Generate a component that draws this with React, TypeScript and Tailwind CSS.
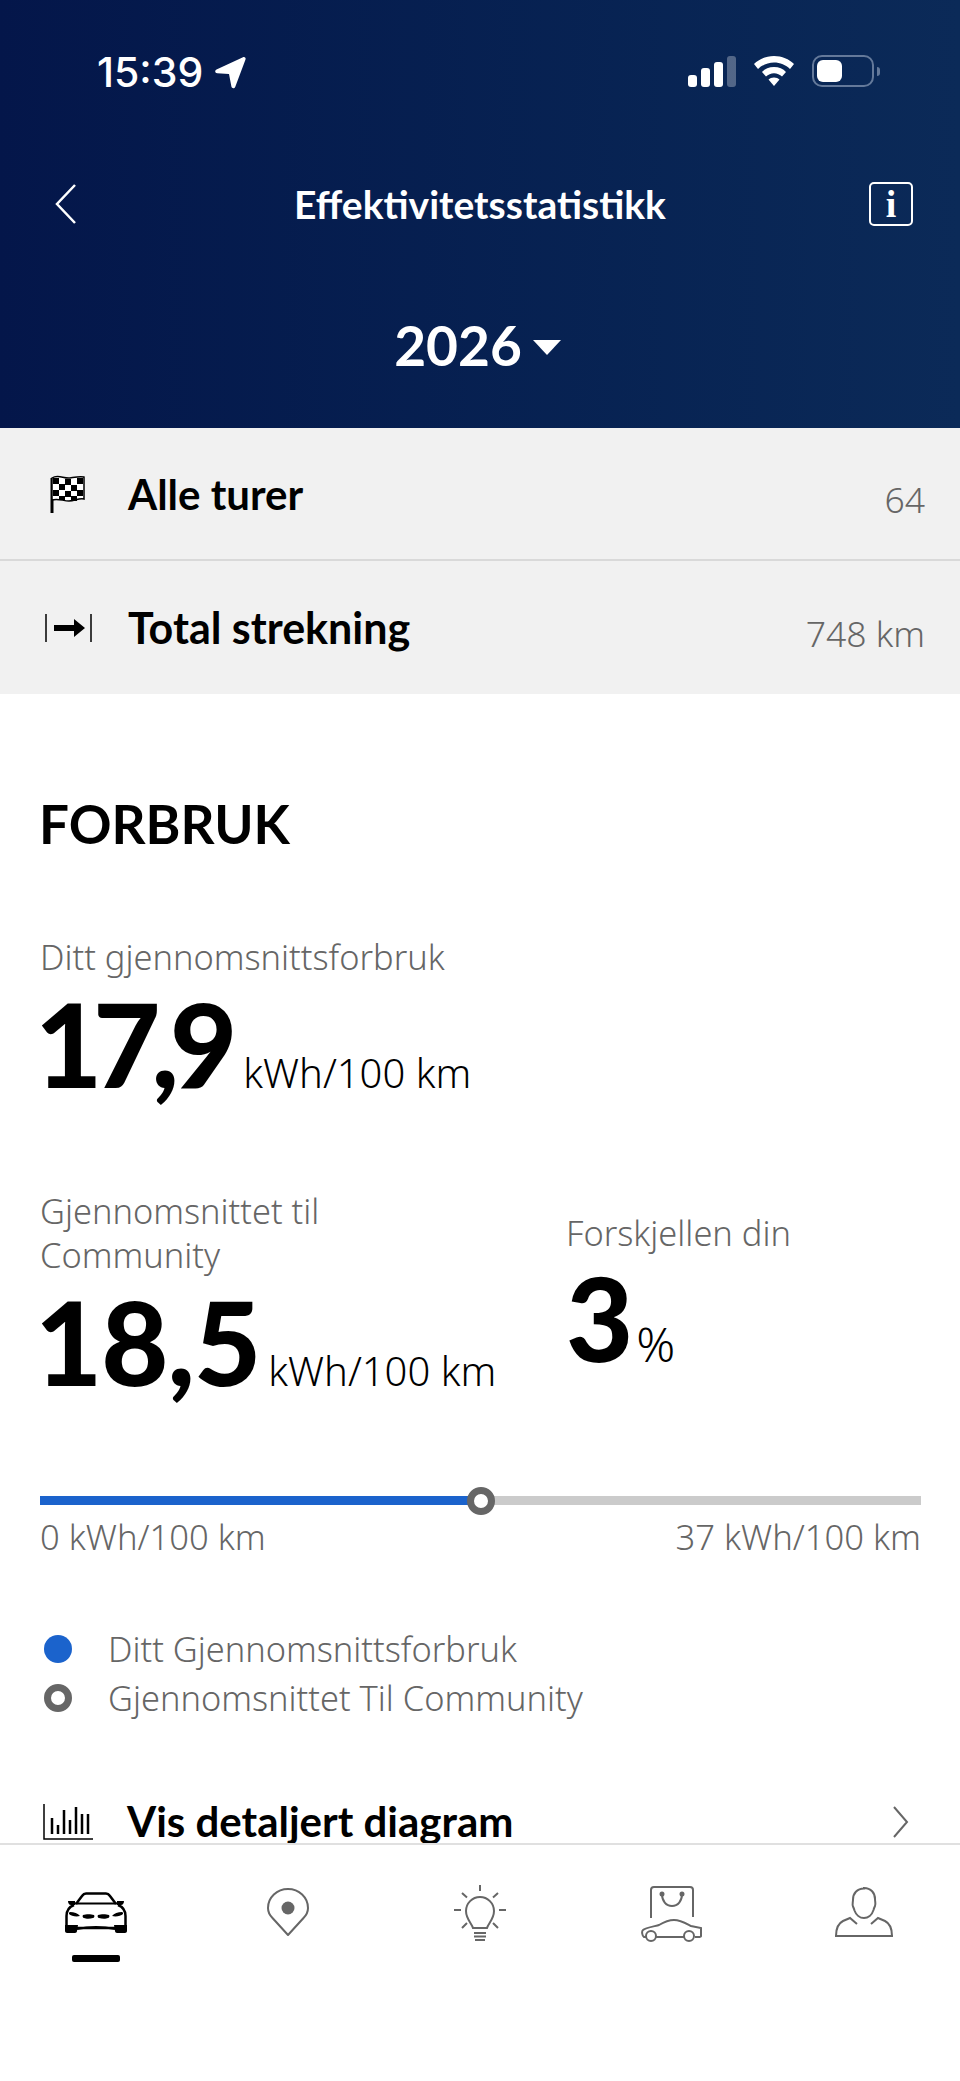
const textFont = "font-['Noto_Sans',sans-serif]";
const boldFont = "font-['Lato',sans-serif] font-bold";

function StatusBar() {
  return (
    <div className="flex h-[144px] items-start justify-between pl-[97px] pr-[80px] pt-[46px] text-white">
      <div className="flex items-center gap-[11px]">
        <span className="font-['Inter',sans-serif] text-[41px] leading-[52px] font-medium">15:39</span>
        <svg width="33" height="33" viewBox="0 0 33 33" fill="white">
          <path d="M29 1.2 2.5 13.5c-2 1-1.500 3.600.7 3.800l11.800.8 2.400 12.500c.4 2 3 2.200 3.800.4L31.500 3.600C32.200 2 30.600.5 29 1.200Z" />
        </svg>
      </div>
      <div className="flex items-start gap-[17px] pt-[9px]">
        <svg width="48" height="32" viewBox="0 0 48 32">
          <rect x="0" y="20" width="9" height="12" rx="3" fill="white" />
          <rect x="13" y="13" width="9" height="19" rx="3" fill="white" />
          <rect x="26" y="7" width="9" height="25" rx="3" fill="white" />
          <rect x="39" y="1" width="9" height="31" rx="3" fill="white" fillOpacity="0.3" />
        </svg>
        <svg width="42" height="32" viewBox="0 0 42 32" fill="white">
          <path d="M21 1C13 1 6 4 1 9l4 5c4-4 10-6.500 16-6.500S33 10 37 14l4-5C36 4 29 1 21 1Z" />
          <path d="M21 12c-5 0-9 1.800-12 5l4 4.500c2-2 5-3.300 8-3.300s6 1.300 8 3.300l4-4.500c-3-3.200-7-5-12-5Z" />
          <path d="M21 22.500c-2.500 0-4 .8-5.500 2L21 31l5.500-6.500c-1.500-1.200-3-2-5.500-2Z" />
        </svg>
        <div className="flex items-center gap-[3px]">
          <div className="flex h-[32px] w-[62px] items-center rounded-[10px] border-[2px] border-[#64799a] p-[3px]">
            <div className="h-[22px] w-[25px] rounded-[6px] bg-white" />
          </div>
          <div className="h-[9px] w-[3px] rounded-r-full bg-[#64799a]" />
        </div>
      </div>
    </div>
  );
}

function BackIcon() {
  return (
    <svg width="44" height="40" viewBox="0 0 44 40" fill="none" stroke="white" strokeWidth="2.500">
      <path d="M20 1 2 20l18 19" />
    </svg>
  );
}

function InfoIcon() {
  return (
    <div className="flex h-[44px] w-[44px] items-center justify-center rounded-[5px] border-[2px] border-white font-['Liberation_Serif',serif] text-[38px] leading-[38px] font-bold text-white">
      i
    </div>
  );
}

function FlagIcon() {
  return (
    <svg width="36" height="38" viewBox="0 0 36 38">
      <path d="M2 38V3" stroke="#000" strokeWidth="3" />
      <path d="M2 3C8-1 14 4 20 3s10-2 14-1v22c-6-1-9 2-15 2s-11-3-17-1Z" fill="#fff" stroke="#000" strokeWidth="1.500" />
      <g fill="#000">
        <rect x="3" y="3" width="6" height="6" />
        <rect x="15" y="4" width="6" height="6" />
        <rect x="27" y="3" width="6" height="6" />
        <rect x="9" y="9" width="6" height="6" />
        <rect x="21" y="10" width="6" height="6" />
        <rect x="3" y="15" width="6" height="6" />
        <rect x="15" y="16" width="6" height="6" />
        <rect x="27" y="15" width="6" height="6" />
        <rect x="21" y="21" width="6" height="5" />
        <rect x="9" y="21" width="6" height="4" />
      </g>
    </svg>
  );
}

function DistanceIcon() {
  return (
    <svg width="47" height="28" viewBox="0 0 47 28">
      <path d="M1 0v28M46 0v28" stroke="#000" strokeWidth="1.500" />
      <path d="M9 11h20V5l11 9-11 9v-6H9Z" fill="#000" />
    </svg>
  );
}

function ChartIcon() {
  return (
    <svg width="50" height="36" viewBox="0 0 50 36" fill="none" stroke="#000">
      <path d="M1 0v35h49" strokeWidth="1.500" />
      <path d="M9 14v16M15 21v9M21 6v24M27 16v14M33 3v27M39 10v20M45 10v20" strokeWidth="2.500" />
    </svg>
  );
}

function DetailChevron() {
  return (
    <svg width="17" height="32" viewBox="0 0 17 32" fill="none" stroke="#666" strokeWidth="2">
      <path d="M2 1l13 15L2 31" />
    </svg>
  );
}

function CarIcon() {
  return (
    <svg width="62" height="41" viewBox="0 0 62 41" fill="none" stroke="#000">
      <path d="M11 12 17 4c1-1.500 2-2.500 4-2.500h20c2 0 3 1 4 2.500l6 8" strokeWidth="2.500" />
      <path d="M10 11.500h42" strokeWidth="2" />
      <path d="M9 13C4 15 1.500 19 1.500 24v12h59V24c0-5-2.500-9-7.500-11" strokeWidth="2.500" />
      <path d="M12 37c12-2.500 26-2.500 38 0" strokeWidth="2" />
      <g fill="#000" stroke="none">
        <path d="M3 9h7v4H6c-2 0-3-2-3-4ZM59 9h-7v4h4c2 0 3-2 3-4Z" />
        <path d="M0 33h13l-1 6c0 1-1 2-2 2H2c-1 0-2-1-2-2ZM62 33H49l1 6c0 1 1 2 2 2h8c1 0 2-1 2-2Z" />
        <path d="M5 20c4 0 8 1.500 10 4-4 1-9 0-11-2 0-1 0-2 1-2ZM57 20c-4 0-8 1.500-10 4 4 1 9 0 11-2 0-1 0-2-1-2Z" />
        <path d="M18 23c3-1 8-1 11 0 1 1 0 3-1 3-3 1-7 1-9 0-1 0-2-2-1-3ZM44 23c-3-1-8-1-11 0-1 1 0 3 1 3 3 1 7 1 9 0 1 0 2-2 1-3Z" />
      </g>
    </svg>
  );
}

function PinIcon() {
  return (
    <svg width="42" height="49" viewBox="0 0 42 49" fill="none">
      <path d="M21 47 5.500 30C2.500 27 1 24 1 20A20 19 0 0 1 41 20C41 24 39.500 27 36.500 30Z" stroke="#666" strokeWidth="2" strokeLinejoin="round" />
      <circle cx="21" cy="20" r="6.500" fill="#666" />
    </svg>
  );
}

function BulbIcon() {
  return (
    <svg width="52" height="56" viewBox="0 0 52 56" fill="none" stroke="#666" strokeWidth="2">
      <path d="M26 0v6M0 25h7M45 25h7M8 8l5 4.500M44 8l-5 4.500M8 43l5-5M44 43l-5-5" />
      <path d="M19 43c-1-4-7-9-7-17a14 14 0 0 1 28 0c0 8-6 13-7 17Z" />
      <path d="M20 48h12M20 51.500h12M21 55h10" />
    </svg>
  );
}

function ShopIcon() {
  return (
    <svg width="62" height="57" viewBox="0 0 62 57" fill="none" stroke="#666" strokeWidth="2">
      <path d="M10 33V5c0-2 1-3 3-3h36c2 0 3 1 3 3v27" />
      <path d="M21 9c0 7 4 12 10 12s10-5 10-12" />
      <circle cx="21" cy="9" r="1.500" fill="#666" />
      <circle cx="41" cy="9" r="1.500" fill="#666" />
      <path d="M5 52H3c-2-1-2.500-6-1-7 2-2 13-4 16-5 5-3 9-5 15-5 7 0 13 4 17 6l10 2v8c0 1-1 1-3 1h-3M15 52h28" />
      <circle cx="10" cy="51" r="5" />
      <circle cx="48" cy="51" r="5" />
    </svg>
  );
}

function PersonIcon() {
  return (
    <svg width="58" height="50" viewBox="0 0 58 50" fill="none" stroke="#666" strokeWidth="2">
      <path d="M29 1.500c-7 0-11 5-11 11 0 3-1 5 0 7s1 2 1.500 4C21 28 25 31 29 31s8-3 9.500-8c.5-2 .5-2 1.500-4s0-4 0-7c0-6-4-11-11-11Z" />
      <path d="M1 49c0-9 3-13 7-15l7-3 7 6M57 49c0-9-3-13-7-15l-7-3-7 6" />
      <path d="M0 49h58" />
    </svg>
  );
}

function StatRow({ icon, label, value, labelSize, border }: { icon: React.ReactNode; label: string; value: string; labelSize: string; border?: boolean }) {
  return (
    <div className={`flex h-[133px] items-center bg-[#f1f1f1] pr-[35px] ${border ? "border-b-[2px] border-[#d9d9d9]" : ""}`}>
      <div className="flex w-[128px] justify-center pl-[16px] pr-[8px]">{icon}</div>
      <span className={`flex-1 pt-[2px] text-black ${labelSize} ${boldFont}`}>{label}</span>
      <span className="pt-[12px] text-[35.500px] font-light text-[#666]">{value}</span>
    </div>
  );
}

function BigValue({ value, unit, tracking, unitGap }: { value: string; unit: string; tracking: string; unitGap: string }) {
  return (
    <div className="ml-[-5px] flex items-baseline text-black">
      <span className={`font-['Lato',sans-serif] text-[116px] leading-[120px] font-black ${tracking}`}>{value}</span>
      <span className={`text-[40px] font-light ${unitGap}`}>{unit}</span>
    </div>
  );
}

export default function App() {
  return (
    <div className={`flex h-[2081px] w-[960px] flex-col overflow-hidden bg-white ${textFont}`}>
      <div className="h-[428px] shrink-0 bg-gradient-to-r from-[#04164a] to-[#0b2a58]">
        <StatusBar />
        <div className="flex h-[120px] items-center justify-between pl-[55px] pr-[47px] text-white">
          <BackIcon />
          <h1 className={`pr-[8px] text-[39px] ${boldFont}`}>Effektivitetsstatistikk</h1>
          <InfoIcon />
        </div>
        <div className="flex items-center justify-center gap-[11px] pr-[5px] pt-[46px] text-white">
          <span className={`text-[55px] leading-[70px] ${boldFont}`}>2026</span>
          <div className="mt-[4px] h-0 w-0 border-x-[14px] border-t-[15px] border-x-transparent border-t-white" />
        </div>
      </div>

      <StatRow icon={<FlagIcon />} label="Alle turer" labelSize="text-[42px]" value="64" border />
      <StatRow icon={<DistanceIcon />} label="Total strekning" labelSize="text-[43px]" value="748 km" />

      <div className="min-h-0 flex-1 overflow-hidden pl-[40px] pr-[39px] pt-[100px]">
        <h2 className={`ml-[-1px] text-[53px] leading-[60px] text-black ${boldFont}`}>FORBRUK</h2>
        <p className="mt-[81px] text-[34.400px] leading-[44px] font-light text-[#666]">Ditt gjennomsnittsforbruk</p>
        <div className="pt-[5px]">
          <BigValue value="17,9" unit="kWh/100 km" tracking="tracking-[-9px]" unitGap="ml-[15px]" />
        </div>

        <div className="mt-[85px] flex">
          <div className="w-[526px]">
            <p className="w-[400px] text-[34.400px] leading-[44px] font-light text-[#666]">Gjennomsnittet til Community</p>
            <div className="pt-[5px]">
              <BigValue value="18,5" unit="kWh/100 km" tracking="tracking-[-1px]" unitGap="ml-[8px]" />
            </div>
          </div>
          <div className="pt-[22px]">
            <p className="text-[34.400px] leading-[44px] font-light text-[#666]">Forskjellen din</p>
            <div className="flex items-baseline gap-[3px] pt-[3px] text-black">
              <span className="font-['Lato',sans-serif] text-[116px] leading-[120px] font-black">3</span>
              <span className="text-[48px] font-light">%</span>
            </div>
          </div>
        </div>

        <div className="relative mt-[94px] flex h-[9px]">
          <div className="w-1/2 bg-[#1b63cc]" />
          <div className="w-1/2 bg-[#cbcbcb]" />
          <div className="absolute left-1/2 top-1/2 h-[28px] w-[28px] -translate-x-1/2 -translate-y-1/2 rounded-full border-[7px] border-[#666] bg-white" />
        </div>
        <div className="mt-[10px] flex justify-between text-[34.600px] leading-[44px] font-light text-[#666]">
          <span>0 kWh/100 km</span>
          <span>37 kWh/100 km</span>
        </div>

        <div className="mt-[65px] flex items-center text-[34.400px] leading-[49px] font-light text-[#666]">
          <div className="ml-[4px] mr-[36px] h-[28px] w-[28px] rounded-full bg-[#1b63cc]" />
          <span>Ditt Gjennomsnittsforbruk</span>
        </div>
        <div className="flex items-center text-[34.400px] leading-[49px] font-light text-[#666]">
          <div className="ml-[4px] mr-[36px] h-[28px] w-[28px] rounded-full border-[7px] border-[#666]" />
          <span>Gjennomsnittet Til Community</span>
        </div>

        <div className="mt-[68px] flex items-center">
          <div className="ml-[3px] mr-[34px]"><ChartIcon /></div>
          <span className={`flex-1 text-[42px] text-black ${boldFont}`}>Vis detaljert diagram</span>
          <DetailChevron />
          <div className="w-[12px]" />
        </div>
      </div>

      <div className="grid h-[238px] shrink-0 grid-cols-5 items-start border-t-[2px] border-[#e0e0e0] bg-white pt-[40px]">
        <div className="flex flex-col items-center pt-[7px]">
          <CarIcon />
          <div className="mt-[22px] h-[7px] w-[48px] rounded-[2px] bg-black" />
        </div>
        <div className="flex justify-center pt-[3px]"><PinIcon /></div>
        <div className="flex justify-center"><BulbIcon /></div>
        <div className="flex justify-center"><ShopIcon /></div>
        <div className="flex justify-center pt-[2px]"><PersonIcon /></div>
      </div>
    </div>
  );
}
